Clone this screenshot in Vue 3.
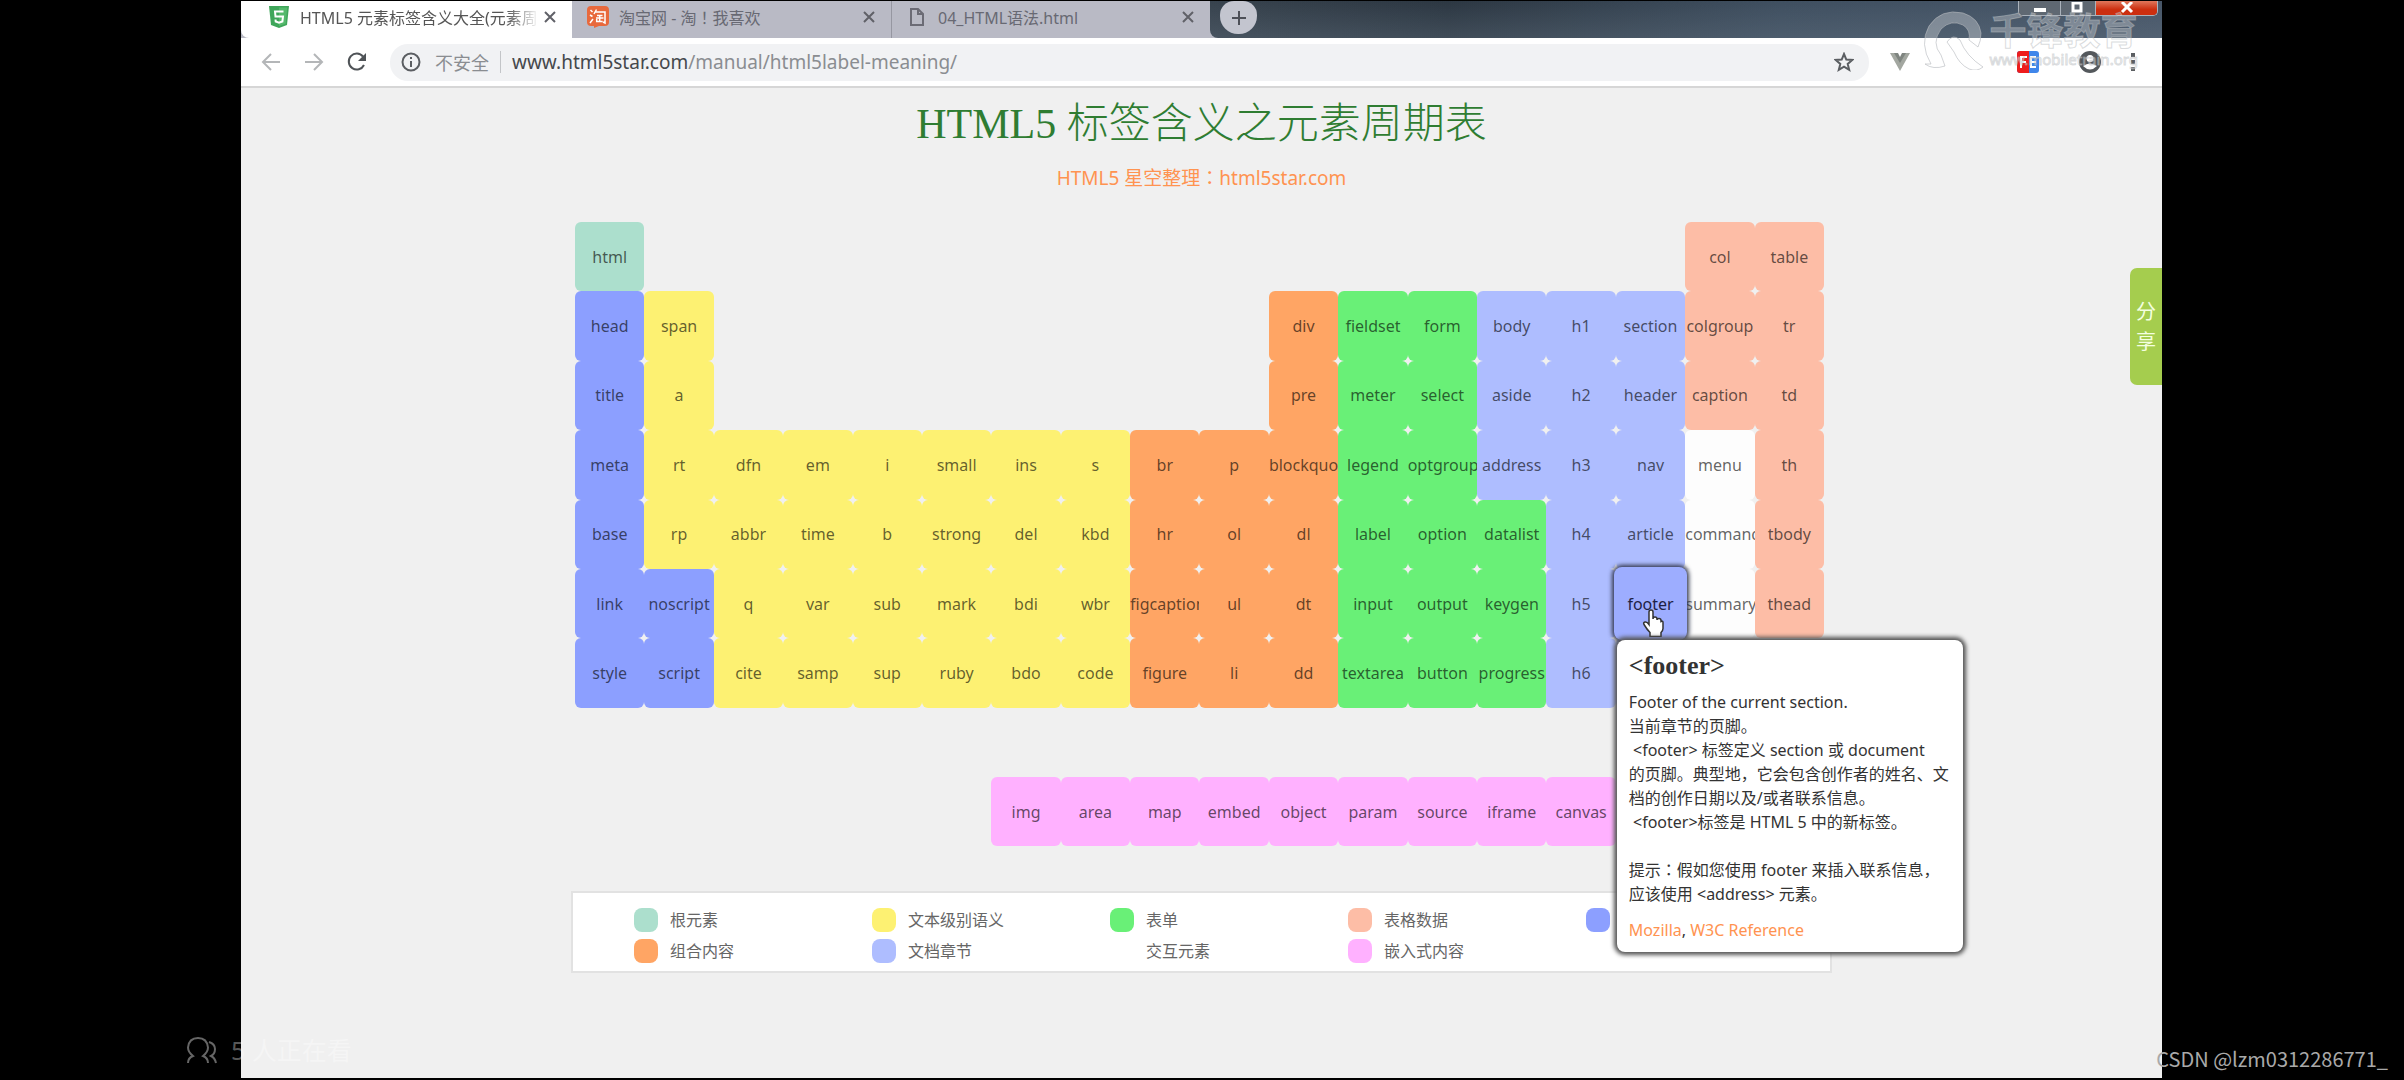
<script setup>
const cell = (name, col, row, kind) => ({ name, col, row, kind })

const column = (col, startRow, kind, names) =>
  names.split(' ').map((name, i) => cell(name, col, startRow + i, kind))

const elements = [
  cell('html', 1, 1, 'root'),
  ...column(1, 2, 'meta', 'head title meta base link style'),
  ...column(2, 2, 'text', 'span a rt rp'),
  ...column(2, 6, 'meta', 'noscript script'),
  ...column(3, 4, 'text', 'dfn abbr q cite'),
  ...column(4, 4, 'text', 'em time var samp'),
  ...column(5, 4, 'text', 'i b sub sup'),
  ...column(6, 4, 'text', 'small strong mark ruby'),
  ...column(7, 4, 'text', 'ins del bdi bdo'),
  ...column(8, 4, 'text', 's kbd wbr code'),
  ...column(9, 4, 'group', 'br hr figcaption figure'),
  ...column(10, 4, 'group', 'p ol ul li'),
  ...column(11, 2, 'group', 'div pre blockquote dl dt dd'),
  ...column(12, 2, 'form', 'fieldset meter legend label input textarea'),
  ...column(13, 2, 'form', 'form select optgroup option output button'),
  ...column(14, 2, 'section', 'body aside address'),
  ...column(14, 5, 'form', 'datalist keygen progress'),
  ...column(15, 2, 'section', 'h1 h2 h3 h4 h5 h6'),
  ...column(16, 2, 'section', 'section header nav article'),
  ...column(17, 1, 'table', 'col colgroup caption'),
  ...column(17, 4, 'interactive', 'menu command summary'),
  ...column(18, 1, 'table', 'table tr td th tbody thead'),
  ...'img area map embed object param source iframe canvas'
    .split(' ')
    .map((name, i) => cell(name, 7 + i, 9, 'embedded')),
]

const legend = [
  { kind: 'root', label: '根元素' },
  { kind: 'text', label: '文本级别语义' },
  { kind: 'form', label: '表单' },
  { kind: 'table', label: '表格数据' },
  { kind: 'meta', label: '' },
  { kind: 'group', label: '组合内容' },
  { kind: 'section', label: '文档章节' },
  { kind: 'interactive', label: '交互元素' },
  { kind: 'embedded', label: '嵌入式内容' },
]
</script>

<template>
  <div class="screen">
    <div class="browser">
      <header class="tabstrip">
        <div class="tab active">
          <svg class="favicon" viewBox="0 0 20 22"><path d="M0 0h20l-2 19-8 3-8-3z" fill="#3fa65a" /><path d="M10 1.500h8.300l-1.600 16.200L10 20z" fill="#55b96c" /><path d="M14.500 5.500H6l.5 5h7.500l-.6 5-3.400 1.200-3.300-1.200-.2-2" fill="none" stroke="#fff" stroke-width="2" /></svg>
          <span class="tab-title faded">HTML5 元素标签含义大全(元素周</span>
          <button class="close" aria-label="关闭标签页"><svg viewBox="0 0 12 12"><path d="M1 1l10 10M11 1L1 11" /></svg></button>
        </div>
        <div class="tab">
          <svg class="favicon" viewBox="0 0 22 22"><path d="M4 0h14q4 0 4 4v12q0 4-4 4h-6l-5 2v-2H4q-4 0-4-4V4q0-4 4-4z" fill="#e8693c" /><path d="M3.500 4l2 2M3 9l2.500 1.500M3 17l3-4M9.500 3.500L7 8M8.500 6H18v11l-2-1M10 9.500h5.500M9 12h7.500M12.700 9v6M9.700 13v2.500h6" fill="none" stroke="#fff" stroke-width="1.500" /></svg>
          <span class="tab-title">淘宝网 - 淘<span class="mid">！</span>我喜欢</span>
          <button class="close" aria-label="关闭标签页"><svg viewBox="0 0 12 12"><path d="M1 1l10 10M11 1L1 11" /></svg></button>
        </div>
        <div class="tab divided">
          <svg class="favicon file" viewBox="0 0 14 18"><path d="M1 1h7l5 5v11H1zM8 1v5h5" fill="none" stroke="#6b6b75" stroke-width="2" /></svg>
          <span class="tab-title">04_HTML语法.html</span>
          <button class="close" aria-label="关闭标签页"><svg viewBox="0 0 12 12"><path d="M1 1l10 10M11 1L1 11" /></svg></button>
        </div>
        <div class="strip-rest">
          <button class="new-tab" aria-label="新标签页"><svg viewBox="0 0 16 16"><path d="M8 1v14M1 8h14" /></svg></button>
        </div>
        <div class="window-buttons">
          <button class="min" aria-label="最小化"><svg viewBox="0 0 14 12"><path d="M1 6h12v4H1z" fill="#fff" /></svg></button>
          <button class="max" aria-label="最大化"><svg viewBox="0 0 14 12"><path d="M2 1h8v8H2z" fill="none" stroke="#fff" stroke-width="3" /></svg></button>
          <button class="quit" aria-label="关闭"><svg viewBox="0 0 14 12"><path d="M2 0l10 10M12 0L2 10" stroke="#fff" stroke-width="3" /></svg></button>
        </div>
      </header>

      <nav class="toolbar">
        <button class="tool pale" aria-label="后退"><svg viewBox="0 0 20 20"><path d="M19 10H2M10 2l-8 8 8 8" /></svg></button>
        <button class="tool pale" aria-label="前进"><svg viewBox="0 0 20 20"><path d="M1 10h17M10 2l8 8-8 8" /></svg></button>
        <button class="tool" aria-label="刷新"><svg viewBox="0 0 20 20"><path d="M17 13a8 8 0 1 1-1-8.500" /><path d="M19 1v8h-8z" fill="#4f5357" stroke="none" /></svg></button>
        <div class="address">
          <svg class="info" viewBox="0 0 20 20"><circle cx="10" cy="10" r="8.500" /><path d="M10 9v6M10 5v2" /></svg>
          <span class="insecure">不安全</span>
          <span class="url"><b>www.html5star.com</b>/manual/html5label-meaning/</span>
          <svg class="star" viewBox="0 0 20 20"><path d="M10 2l2.300 5.600 6 .4-4.600 3.900 1.500 5.900L10 14.600l-5.200 3.200 1.500-5.900L1.700 8l6-.4z" /></svg>
        </div>
        <div class="extensions">
          <svg class="vue" viewBox="0 0 20 18"><path d="M0 0h6l4 7 4-7h6L10 18z" fill="#a3a7a0" /><path d="M4 0h4l2 4 2-4h4l-6 10z" fill="#7f8580" /></svg>
          <svg class="fe" viewBox="0 0 22 22"><rect width="22" height="22" rx="3" fill="#3f86ea" /><path d="M3 0h9v22H3q-3 0-3-3V3q0-3 3-3z" fill="#ee1d1d" /><path d="M4 17V6h6M4 11h5M19 6h-5v10h5M14 11h5" fill="none" stroke="#fff" stroke-width="2" /></svg>
          <svg class="account" viewBox="0 0 22 22"><circle cx="11" cy="11" r="11" fill="#54585c" /><circle cx="11" cy="7.500" r="3.500" fill="#fff" /><path d="M4 15q7-5 14 0-7 7-14 0z" fill="#fff" /></svg>
          <svg class="dots" viewBox="0 0 4 18"><path d="M0 0h4v4H0zM0 7h4v4H0zM0 14h4v4H0z" fill="#5b5e62" /></svg>
        </div>
      </nav>

      <main class="page">
        <h1>HTML5 标签含义之元素周期表</h1>
        <p class="source"><a href="#">HTML5 星空整理<span class="mid">：</span>html5star.com</a></p>

        <div class="chart">
          <section class="elements">
            <a
              v-for="item in elements"
              :key="item.name"
              href="#"
              class="element"
              :class="item.kind"
              :style="{ gridColumn: item.col, gridRow: item.row }"
            ><span>{{ item.name }}</span></a>
            <div class="section gap-cell"></div>
            <div class="focus-cell">
              <a href="#" class="element focused"><span>footer</span></a>
              <svg class="pointer" viewBox="0 0 22 28"><path d="M7 15V3q0-2 2-2t2 2v7q0-2 2-2t2 2v1q0-1.500 2-1.500t2 2v1q2-1 2 1v6q0 2-2 4v4H8v-4q-3-3-6-8-1-2 1-2.500t4 2.500z" fill="#fff" stroke="#333" stroke-width="1.500" /></svg>
              <article class="tooltip">
                <h2>&lt;footer&gt;</h2>
                <p>
                  Footer of the current section.<br />
                  当前章节的页脚。<br />
                  &nbsp;&lt;footer&gt; 标签定义 section 或 document<br />
                  的页脚。典型地，它会包含创作者的姓名、文<br />
                  档的创作日期以及/或者联系信息。<br />
                  &nbsp;&lt;footer&gt;标签是 HTML 5 中的新标签。<br />
                  <br />
                  提示<span class="mid">：</span>假如您使用 footer 来插入联系信息，<br />
                  应该使用 &lt;address&gt; 元素。
                </p>
                <p class="refs"><a href="#">Mozilla</a>, <a href="#">W3C Reference</a></p>
              </article>
            </div>
          </section>

          <ul class="legend">
            <li v-for="item in legend" :key="item.kind">
              <i :class="item.kind"></i>{{ item.label }}
            </li>
          </ul>
        </div>
      </main>

      <button class="share">分<br />享</button>

      <div class="brand">
        <svg viewBox="0 0 62 60"><path d="M8 54Q-4 34 6 16 18-2 40 3q16 5 18 20 0 8-3 14l-9-7q2-10-6-15-12-6-22 4-10 14 0 26l4 11q-12 4-20-2z" /><path d="M24 32q6-9 13-2 6 16 23 27-6 5-14 2-10-5-15-17z" /></svg>
        <div>
          <strong>千锋教育</strong>
          <small>www.mobiletrain.org</small>
        </div>
      </div>
    </div>

    <div class="viewers">
      <svg viewBox="0 0 30 27"><path d="M1 26q0-5 5-7Q1 15 1 10.500 2 1 11 1t10 9.500q0 4.500-5 8.500 5 2 5 7M22 5q6 2 6 7t-4 7q4 2 5 7" /></svg>
      <span>5 人正在看</span>
    </div>
    <div class="credit">CSDN @lzm0312286771_</div>
  </div>
</template>

<style>
body {
  margin: 0;
  background: #000;
}
</style>

<style scoped>
* {
  box-sizing: border-box;
}

.screen {
  position: relative;
  display: flex;
  min-height: 100vh;
  padding: 1px 242px 2px 241px;
  overflow: hidden;
  background: #000;
  font-family: "Noto Sans", "Noto Sans CJK SC", sans-serif;
  font-size: 16px;
}

button {
  padding: 0;
  border: 0;
  background: none;
  font: inherit;
}

a {
  color: inherit;
  text-decoration: none;
}

svg {
  display: block;
  flex: none;
}

/* Full-width punctuation centred in its box */
.mid {
  font-family: "Noto Sans CJK TC", sans-serif;
  line-height: 1;
}

.browser {
  position: relative;
  flex: 1;
  min-width: 0;
  background: #f0f0f0;
}

.tabstrip {
  display: flex;
  height: 37px;
  background: #b9bac5;
}

.tab {
  display: flex;
  align-items: center;
  width: 319px;
  padding: 0 16px 6px 15px;
  color: #686973;
}

.tab.active {
  width: 331px;
  padding-left: 27px;
  border-radius: 0 0 0 8px;
  background: #fff;
  color: #555;
}

.tab.divided {
  padding-left: 18px;
  border-left: 1px solid #9697a1;
}

.favicon {
  width: 22px;
  height: 22px;
  margin-right: 10px;
}

.favicon.file {
  width: 14px;
  height: 18px;
  margin-right: 14px;
}

.tab-title {
  flex: 1;
  overflow: hidden;
  white-space: nowrap;
}

.faded {
  mask-image: linear-gradient(to right, #000 85%, transparent 98%);
}

.close svg {
  width: 12px;
  height: 12px;
  fill: none;
  stroke: #606168;
  stroke-width: 2;
}

.strip-rest {
  flex: 1;
  padding-left: 10px;
  border-bottom-left-radius: 8px;
  background: linear-gradient(to bottom, transparent, rgba(110, 125, 140, 0.3)), linear-gradient(to right, #37424d, #2c3742 25%, #3f4f60 60%, #475668);
}

.new-tab {
  display: grid;
  place-items: center;
  width: 37px;
  height: 33px;
  border-radius: 14px 14px 18px 18px;
  background: #c3c5cf;
}

.new-tab svg {
  width: 16px;
  height: 16px;
  fill: none;
  stroke: #4d5058;
  stroke-width: 2;
}

.window-buttons {
  position: absolute;
  top: 0;
  right: 4px;
  display: flex;
  height: 15px;
  border: 1px solid #aab2bb;
  border-top: 0;
  border-radius: 0 0 5px 5px;
  overflow: hidden;
}

.window-buttons button {
  display: grid;
  place-items: center;
  width: 42px;
  background: #5f6872;
  border-right: 1px solid #aab2bb;
}

.window-buttons .max {
  width: 35px;
}

.window-buttons .quit {
  width: 61px;
  border: 0;
  background: linear-gradient(#e0775c, #cc2f10 60%);
}

.window-buttons svg {
  width: 14px;
  height: 12px;
}

.toolbar {
  display: flex;
  align-items: center;
  height: 50px;
  padding: 0 27px 0 20px;
  border-bottom: 2px solid #d6d6d6;
  background: #fff;
}

.tool {
  margin-right: 23px;
}

.tool svg {
  width: 20px;
  height: 20px;
  fill: none;
  stroke: #4f5357;
  stroke-width: 2;
}

.tool.pale svg {
  stroke: #b4b6b8;
}

.address {
  display: flex;
  flex: 1;
  align-items: center;
  height: 37px;
  margin-right: 21px;
  padding: 0 15px 0 11px;
  border-radius: 18px;
  background: #f1f2f4;
  color: #8a8d91;
  font-size: 18px;
}

.address svg {
  width: 20px;
  height: 20px;
  fill: none;
  stroke: #5b5e62;
  stroke-width: 2;
}

.insecure {
  margin: 0 11px 0 14px;
}

.url {
  flex: 1;
  padding-left: 11px;
  border-left: 1px solid #c3c5c8;
  font-size: 19px;
  line-height: 22px;
}

.url b {
  color: #45484c;
  font-weight: 400;
}

.extensions {
  display: flex;
  align-items: center;
}

.vue {
  width: 20px;
  height: 18px;
}

.fe {
  width: 22px;
  height: 22px;
  margin: 0 40px 0 107px;
}

.account {
  width: 22px;
  height: 22px;
  margin-right: 30px;
}

.dots {
  width: 4px;
  height: 18px;
}

.page {
  display: flex;
  flex-direction: column;
  align-items: center;
  padding: 8px 40px 0;
}

h1 {
  margin: 0 0 12px;
  color: #2f7d32;
  font-family: "Liberation Serif", "Noto Sans CJK SC", serif;
  font-size: 42px;
  font-weight: 300;
  line-height: 56px;
}

.source {
  margin: 0 0 30px;
  color: #ff9350;
  font-size: 19px;
  line-height: 28px;
}

.chart {
  width: 100%;
  max-width: 1261px;
}

.elements {
  display: grid;
  grid-template-columns: repeat(18, minmax(0, 1fr));
  grid-template-rows: repeat(9, minmax(0, 1fr));
  aspect-ratio: 2 / 1;
  margin: 0 8px 44px 4px;
}

.element {
  display: flex;
  align-items: center;
  overflow: hidden;
  border-radius: 6px;
  color: rgba(0, 0, 0, 0.62);
}

.element span {
  width: 100%;
  text-align: center;
  white-space: nowrap;
}

.root { background: #acdfcd; }
.meta { background: #8c9fff; }
.text { background: #fdf172; }
.group { background: #ffa564; }
.form { background: #69f077; }
.section { background: #aebdff; }
.table { background: #fdbda6; }
.interactive { background: #fdfdfd; }
.embedded { background: #ffb1ff; }

.gap-cell {
  grid-column: 16;
  grid-row: 7;
  border-radius: 6px;
}

.focus-cell {
  position: relative;
  z-index: 1;
  grid-column: 16;
  grid-row: 6;
}

.focused {
  height: 100%;
  background: #9dadff;
  box-shadow: 0 0 0 2px #9dadff, 0 0 4px 4px #33384f;
  color: #1d2144;
}

.pointer {
  position: absolute;
  top: 40px;
  left: 26px;
  width: 22px;
  height: 28px;
}

.tooltip {
  position: absolute;
  top: 100%;
  left: 0;
  width: 346px;
  margin: 2px 0 0 1px;
  padding: 12px 12px 10px;
  border-radius: 8px;
  background: #fff;
  box-shadow: 0 0 4px 3px #555;
  color: #333;
  line-height: 24px;
  white-space: nowrap;
}

.tooltip h2 {
  margin: 0 0 10px;
  font-family: "Liberation Serif", serif;
  font-size: 26px;
  line-height: 28px;
}

.tooltip p {
  margin: 0;
}

.tooltip .refs {
  margin-top: 12px;
}

.refs a {
  color: #ff9350;
}

.legend {
  display: grid;
  grid-template-columns: repeat(5, 238px);
  margin: 0;
  padding: 12px 0 4px 61px;
  border: 2px solid #e2e2e2;
  background: #fff;
  color: #666;
  line-height: 30px;
  list-style: none;
}

.legend li {
  display: flex;
  align-items: center;
  height: 31px;
}

.legend i {
  width: 24px;
  height: 24px;
  margin-right: 12px;
  border-radius: 8px;
}

.legend .interactive {
  background: #fff;
}

.share {
  position: absolute;
  top: 267px;
  right: 0;
  width: 32px;
  height: 117px;
  border-radius: 7px 0 0 7px;
  background: #a5cd4e;
  color: #f4ffe0;
  font-size: 20px;
  line-height: 30px;
}

.brand {
  position: absolute;
  top: 9px;
  right: 24px;
  display: flex;
  gap: 4px;
  color: rgba(255, 255, 255, 0.3);
  -webkit-text-stroke: 1px rgba(180, 184, 188, 0.5);
  white-space: nowrap;
}

.brand svg {
  width: 62px;
  height: 60px;
  fill: rgba(255, 255, 255, 0.3);
  stroke: rgba(180, 184, 188, 0.6);
}

.brand div {
  display: flex;
  flex-direction: column;
}

.brand strong {
  font-size: 37px;
  line-height: 42px;
}

.brand small {
  font-size: 15px;
  line-height: 14px;
}

.viewers {
  position: absolute;
  bottom: 14px;
  left: 187px;
  display: flex;
  align-items: center;
  gap: 14px;
  color: rgba(255, 255, 255, 0.35);
  font-size: 25px;
  line-height: 32px;
}

.viewers svg {
  width: 30px;
  height: 27px;
  fill: none;
  stroke: rgba(255, 255, 255, 0.4);
  stroke-width: 2;
}

.credit {
  position: absolute;
  right: 16px;
  bottom: 7px;
  color: #a9a9a9;
  font-family: "Noto Sans CJK SC", sans-serif;
  font-size: 20px;
  line-height: 28px;
}
</style>
